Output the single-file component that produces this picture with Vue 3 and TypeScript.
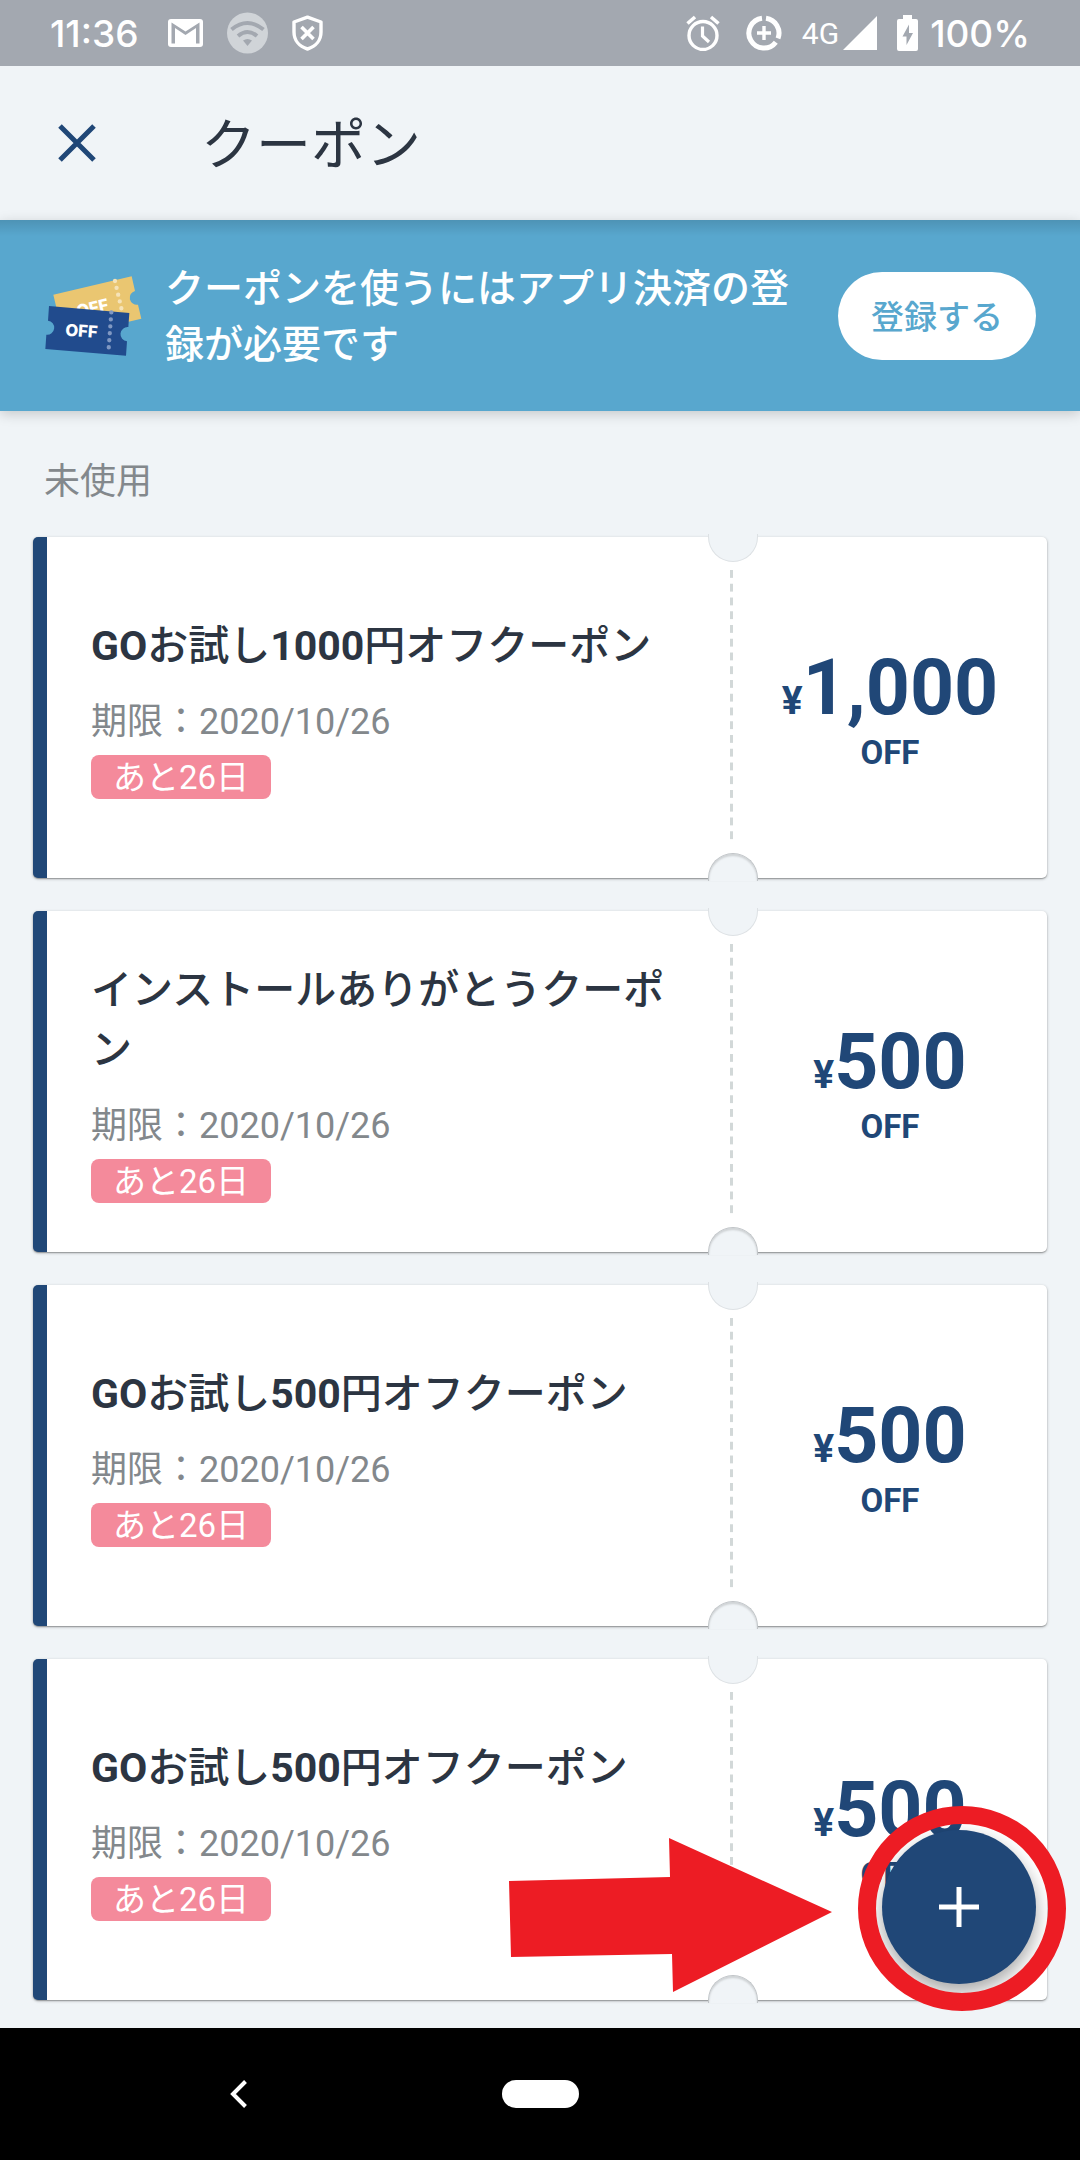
<script setup lang="ts">
interface Coupon {
  id: number
  title: string
  expires: string
  daysLeft: number
  amount: number
}

interface Run {
  text: string
  latin: boolean
}

const coupons: Coupon[] = [
  { id: 1, title: 'GOお試し1000円オフクーポン', expires: '2020/10/26', daysLeft: 26, amount: 1000 },
  { id: 2, title: 'インストールありがとうクーポン', expires: '2020/10/26', daysLeft: 26, amount: 500 },
  { id: 3, title: 'GOお試し500円オフクーポン', expires: '2020/10/26', daysLeft: 26, amount: 500 },
  { id: 4, title: 'GOお試し500円オフクーポン', expires: '2020/10/26', daysLeft: 26, amount: 500 },
]

const formatAmount = (value: number): string => value.toLocaleString('en-US')

// Latin letters and digits are set bolder than the Japanese around them.
const titleRuns = (title: string): Run[] =>
  title
    .split(/([A-Za-z0-9]+)/)
    .filter((text) => text !== '')
    .map((text) => ({ text, latin: /^[A-Za-z0-9]/.test(text) }))
</script>

<template>
  <div class="phone">
    <div class="status">
      <div class="status-left">
        <span class="clock">11:36</span>
        <svg class="mail" width="35" height="28" viewBox="0 0 35 28">
          <rect width="35" height="28" rx="3" fill="#fff" />
          <path d="M3.500 3.500L17.500 12.500L31.500 3.500V24.500H28V9L17.500 16L7 9V24.500H3.500z" fill="#a3a8b0" />
        </svg>
        <svg width="41" height="42" viewBox="0 0 41 42">
          <circle cx="20.500" cy="21" r="20.500" fill="#d0d4d8" />
          <g fill="none" stroke="#a3a8b0" stroke-width="4">
            <path d="M4.500 17.500Q20.500 4.500 36.500 17.500" />
            <path d="M11 24Q20.500 16 30 24" />
          </g>
          <path d="M16 28.500Q20.500 25.500 25 28.500L20.500 34z" fill="#a3a8b0" />
        </svg>
        <svg width="31" height="36" viewBox="0 0 31 36">
          <path d="M15.500 2.200L29 7v10c0 8-5 14.500-13.500 17C7 31.500 2 25 2 17V7z" fill="none" stroke="#fff" stroke-width="3.400" stroke-linejoin="round" />
          <path d="M9.500 12l12 12M21.500 12l-12 12" stroke="#fff" stroke-width="3.600" />
        </svg>
      </div>
      <div class="status-right">
        <svg class="alarm" width="34" height="36" viewBox="0 0 34 36">
          <circle cx="17" cy="20.500" r="14" fill="none" stroke="#fff" stroke-width="3.400" />
          <path d="M16.500 11.500v9.500l6.500 6" fill="none" stroke="#fff" stroke-width="3.200" />
          <path d="M1.500 8.500l7.500-6.500M32.500 8.500L25 2" stroke="#fff" stroke-width="3.600" />
        </svg>
        <svg class="saver" width="36" height="36" viewBox="0 0 36 36">
          <g fill="none" stroke="#fff" stroke-width="5">
            <path d="M16 3.200A15 15 0 1 0 29.800 27.200" />
            <path d="M20 3.200A15 15 0 0 1 32 23.400" />
          </g>
          <path d="M18 11v14M11 18h14" stroke="#fff" stroke-width="3.400" />
        </svg>
        <span class="network">4G</span>
        <svg class="signal" width="34" height="34" viewBox="0 0 34 34"><path d="M34 0v34H0z" fill="#fff" /></svg>
        <svg class="battery" width="21" height="36" viewBox="0 0 21 36">
          <path d="M6 0h9v4h4q2 0 2 2v28q0 2-2 2H2q-2 0-2-2V6q0-2 2-2h4z" fill="#fff" />
          <path d="M12 9.500L5.500 21.500h4v8.500L16 18h-4z" fill="#a3a8b0" />
        </svg>
        <span class="clock">100%</span>
      </div>
    </div>

    <header class="appbar">
      <button class="close" type="button" aria-label="閉じる">
        <svg width="38" height="38" viewBox="0 0 38 38"><path d="M2 2l34 34M36 2L2 36" stroke="#204777" stroke-width="5" /></svg>
      </button>
      <h1>クーポン</h1>
    </header>

    <main class="screen">
      <section class="banner">
        <svg class="tickets" width="98" height="80" viewBox="42 45 294 240">
          <path d="M70 101L305 46L315 90A21 21 0 0 0 324 131L334 173L100 228z" fill="#eac671" />
          <path d="M255 60L275 146" stroke="#f6e3b8" stroke-width="13" stroke-linecap="round" stroke-dasharray="0 21" />
          <text x="144" y="169" transform="rotate(-13 144 169)" class="ticket-text">OFF</text>
          <path d="M57 135L298 156L295 198A21 21 0 0 0 291 241L288 284L46 264L49 221A21 21 0 0 0 54 179z" fill="#214b8d" />
          <path d="M244 154L235 277" stroke="#8098c2" stroke-width="13" stroke-linecap="round" stroke-dasharray="0 21" />
          <text x="105" y="224" transform="rotate(4 105 224)" class="ticket-text">OFF</text>
        </svg>
        <p>クーポンを使うにはアプリ決済の登録が必要です</p>
        <button class="register" type="button">登録する</button>
      </section>

      <h2>未使用</h2>

      <ul class="coupons">
        <li v-for="coupon in coupons" :key="coupon.id" class="coupon">
          <div class="info">
            <h3><span v-for="(run, i) in titleRuns(coupon.title)" :key="i" :class="{ latin: run.latin }">{{ run.text }}</span></h3>
            <p class="expires">期限：{{ coupon.expires }}</p>
            <span class="badge">あと{{ coupon.daysLeft }}日</span>
          </div>
          <div class="stub">
            <p class="amount"><span class="yen">¥</span>{{ formatAmount(coupon.amount) }}</p>
            <p class="off">OFF</p>
          </div>
        </li>
      </ul>

      <button class="fab" type="button" aria-label="クーポンを追加">
        <svg width="40" height="40" viewBox="0 0 40 40"><path d="M20 0v40M0 20h40" stroke="#fff" stroke-width="5" /></svg>
      </button>
      <svg class="ring" width="208" height="205" viewBox="0 0 208 205">
        <ellipse cx="104" cy="102.500" rx="95" ry="93.500" fill="none" stroke="#ed1c24" stroke-width="18" />
      </svg>
      <svg class="arrow" width="323" height="154" viewBox="0 0 323 154">
        <path d="M0 43L161 39L160 0L323 74L164 154L163 116L2 119z" fill="#ed1c24" />
      </svg>
    </main>

    <nav class="navbar">
      <button class="back" type="button" aria-label="戻る">
        <svg width="18" height="28" viewBox="0 0 18 28"><path d="M15.500 1.500L3 14l12.500 12.500" fill="none" stroke="#fff" stroke-width="4" /></svg>
      </button>
      <button class="home" type="button" aria-label="ホーム"></button>
      <span></span>
    </nav>
  </div>
</template>

<style>
body {
  margin: 0;
  background: #f0f4f7;
}
</style>

<style scoped>
.phone {
  display: flex;
  flex-direction: column;
  min-height: 100vh;
  font-family: Roboto, 'Noto Sans CJK JP', sans-serif;
  color: #2c3542;
  background: #f0f4f7;
}

h1,
h2,
h3,
p,
ul {
  margin: 0;
  padding: 0;
}

button {
  padding: 0;
  border: 0;
  background: none;
  font: inherit;
}

svg {
  display: block;
  flex: none;
}

.status {
  display: flex;
  align-items: center;
  justify-content: space-between;
  height: 66px;
  padding: 0 50px;
  background: #a3a8b0;
  color: #fff;
}

.status-left,
.status-right {
  display: flex;
  align-items: center;
}

.status-left {
  gap: 24px;
}

.mail {
  margin-left: 6px;
}

.clock {
  padding-top: 2px;
  font-family: Inter, sans-serif;
  font-size: 37px;
  font-weight: 500;
  line-height: 64px;
}

.network {
  font-size: 30px;
}

.saver {
  margin: 0 20px 0 26px;
}

.signal {
  margin: 0 20px 0 4px;
}

.battery {
  margin-right: 12px;
}

.appbar {
  display: flex;
  align-items: center;
  gap: 105px;
  height: 154px;
  padding: 0 58px;
}

h1 {
  padding-top: 3px;
  font-size: 55px;
  font-weight: 400;
  line-height: 80px;
}

.screen {
  position: relative;
  flex: 1;
  padding-bottom: 28px;
}

.banner {
  display: flex;
  align-items: center;
  min-height: 191px;
  padding: 0 44px;
  box-sizing: border-box;
  color: #fff;
  background: linear-gradient(rgba(0, 0, 0, 0.12), rgba(0, 0, 0, 0) 16px) #58a7ce;
  box-shadow: 0 3px 12px rgba(0, 0, 0, 0.18);
}

.banner p {
  flex: 1;
  margin: 0 40px 0 23px;
  padding-top: 2px;
  font-size: 39px;
  font-weight: 500;
  line-height: 56px;
}

.ticket-text {
  font-family: Inter, sans-serif;
  font-size: 50px;
  font-weight: 800;
  fill: #fff;
}

.register {
  flex: none;
  width: 198px;
  height: 88px;
  padding-bottom: 2px;
  border-radius: 44px;
  background: #fff;
  color: #58a7ce;
  font-size: 33px;
  font-weight: 500;
}

h2 {
  padding: 45px 44px 29px;
  font-size: 36px;
  font-weight: 400;
  line-height: 52px;
  color: #83888c;
}

.coupons {
  display: grid;
  gap: 33px;
  padding: 0 33px;
  list-style: none;
}

.coupon {
  position: relative;
  display: grid;
  grid-template-columns: 1fr 314px;
  min-height: 341px;
  box-sizing: border-box;
  border-left: 14px solid #204777;
  border-radius: 5px;
  background: #fff;
  box-shadow: 0 1px 3px rgba(0, 0, 0, 0.3), 0 1px 1px rgba(0, 0, 0, 0.2);
}

.info {
  display: flex;
  flex-direction: column;
  align-items: flex-start;
  justify-content: center;
  padding: 0 44px;
}

h3 {
  font-size: 41px;
  font-weight: 500;
  line-height: 60px;
}

.latin {
  font-weight: 700;
}

.expires {
  margin: 20px 0 7px;
  font-size: 36px;
  line-height: 52px;
  color: #83888c;
}

.badge {
  padding: 2px 22px 0;
  border-radius: 8px;
  background: #f48a9b;
  color: #fff;
  font-size: 33px;
  line-height: 42px;
}

.stub {
  display: flex;
  flex-direction: column;
  align-items: center;
  justify-content: center;
  padding-top: 14px;
  color: #204777;
  font-weight: 700;
}

/* perforated line between the details and the stub */
.info::after {
  content: '';
  position: absolute;
  top: 33px;
  bottom: 33px;
  right: 314px;
  width: 3px;
  background: linear-gradient(#d2d8d8 8px, transparent 8px) 0 0 / 3px 14px;
  background-repeat: round;
}

/* punched notches at both ends of the perforation */
.stub::before,
.stub::after {
  content: '';
  position: absolute;
  right: 289px;
  width: 50px;
  height: 28px;
  box-sizing: border-box;
  border: 1px solid #dde1e4;
  background: #f0f4f7;
}

.stub::before {
  top: -3px;
  border-top: 0;
  border-radius: 0 0 25px 25px;
}

.stub::after {
  bottom: -3px;
  border-color: #c0c4c7;
  border-bottom: 0;
  border-radius: 25px 25px 0 0;
  box-shadow: inset 0 2px 2px rgba(0, 0, 0, 0.14);
}

.amount {
  font-size: 77px;
  line-height: 64px;
}

.yen {
  font-size: 39px;
}

.off {
  font-size: 33px;
  line-height: 40px;
}

.fab {
  position: absolute;
  right: 44px;
  bottom: 44px;
  display: grid;
  place-items: center;
  width: 154px;
  height: 154px;
  border-radius: 50%;
  background: #204777;
  box-shadow: 0 8px 18px rgba(0, 0, 0, 0.35);
}

.ring,
.arrow {
  position: absolute;
  pointer-events: none;
}

.ring {
  right: 14px;
  bottom: 17px;
}

.arrow {
  right: 248px;
  bottom: 36px;
}

.navbar {
  display: grid;
  grid-template-columns: 1fr 77px 1fr;
  align-items: center;
  height: 132px;
  background: #000;
}

.back {
  justify-self: center;
  padding-right: 24px;
}

.home {
  height: 28px;
  border-radius: 14px;
  background: #fff;
}
</style>
